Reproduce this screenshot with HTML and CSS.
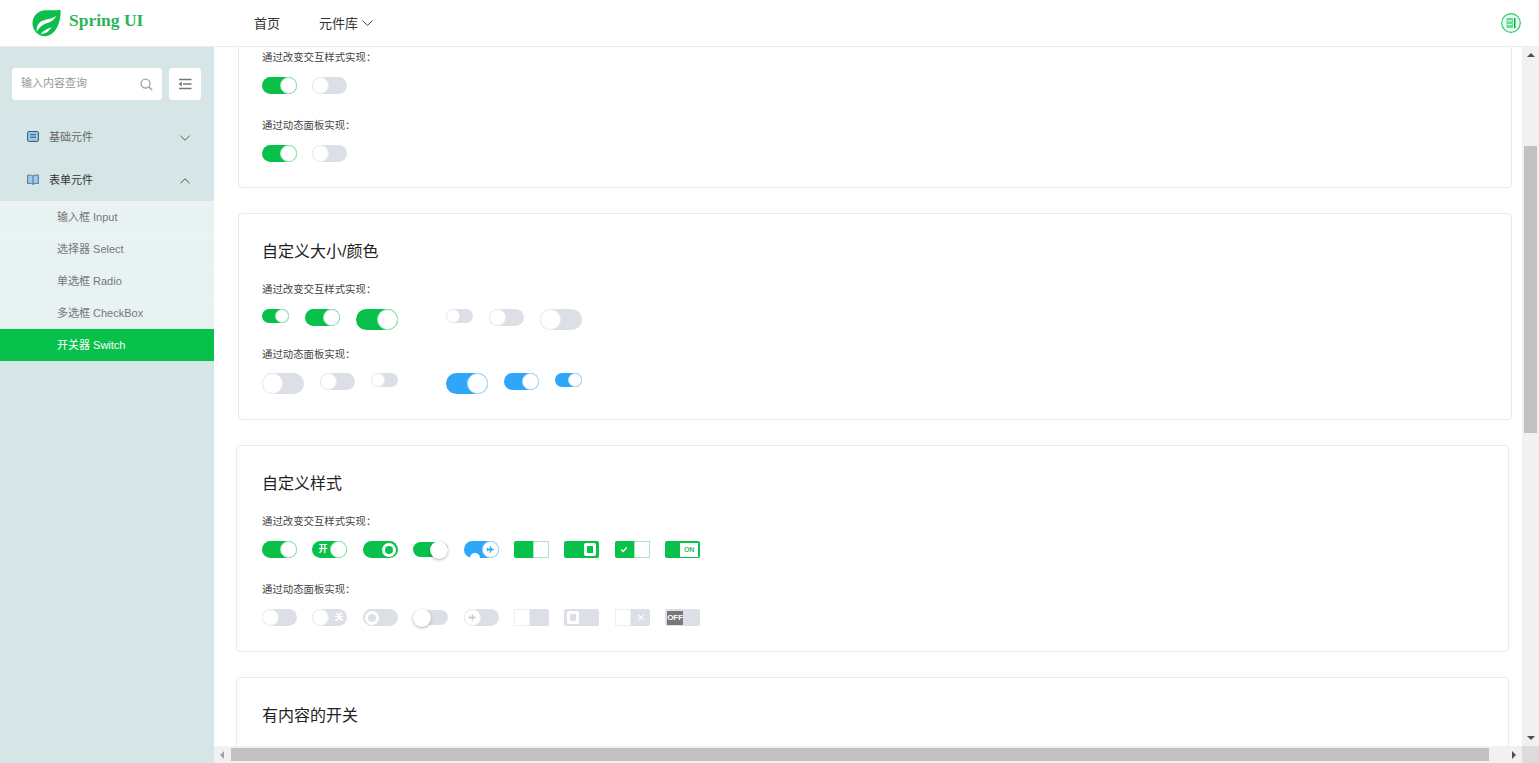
FILE: index.html
```html
<!DOCTYPE html>
<html lang="zh-CN">
<head>
  <meta charset="UTF-8">
  <title>Spring UI</title>
  <link rel="stylesheet" href="styles.css">
</head>
<body>

<div class="app">
  <header class="header">
    <div class="logo">
      <svg class="logo-icon" viewBox="0 0 30 28">
        <path d="M14 .8C19 .8 24.500 1.200 29.500 .4C30 6 29 13 26 18.500C23 24 18.500 27.800 13.500 27.800C6.300 27.800 .5 21.800 .5 14.300C.5 6.800 6.500 .8 14 .8z" fill="#0cbf4c"/>
        <path d="M5 23C4 17 7.500 12.500 13 11C17.500 9.800 21.500 9.500 25 6.500C23.500 10.500 20.500 12.500 16 14C11 15.600 8 18 5 23z" fill="#fff"/>
        <path d="M9 25C12 21.800 15.500 20.500 20 18.500C17.500 23 13.500 25.800 9 25z" fill="#fff"/>
      </svg>
      <span class="logo-text">Spring UI</span>
    </div>
    <nav class="nav">
      <a class="nav-link">首页</a>
      <a class="nav-link">元件库
        <svg class="nav-arrow" viewBox="0 0 11 6"><path d="M.5 .6L5.500 5.400L10.500 .6" fill="none" stroke="#444" stroke-width="1"/></svg>
      </a>
    </nav>
    <div class="user">
      <svg viewBox="0 0 20 20" width="20" height="20">
        <circle cx="10" cy="10" r="9.300" fill="#e8fbef" stroke="#35c972" stroke-width="1.200"/>
        <rect x="5.500" y="5" width="6.500" height="10" fill="#5fe08f"/>
        <rect x="6.500" y="7.300" width="4.500" height="1" fill="#e8fbef"/>
        <rect x="6.500" y="11" width="4.500" height="1" fill="#e8fbef"/>
        <rect x="13" y="5" width="1.500" height="10" fill="#12a64c"/>
      </svg>
    </div>
  </header>

  <div class="body">
    <aside class="sidebar">
      <div class="search-row">
        <div class="search">
          <span class="search-text">输入内容查询</span>
          <svg viewBox="0 0 14 14" width="13" height="13"><circle cx="6" cy="6" r="4.800" fill="none" stroke="#a8a8a8" stroke-width="1.500"/><path d="M9.400 9.400L13 13" stroke="#a8a8a8" stroke-width="1.700"/></svg>
        </div>
        <div class="collapse">
          <svg viewBox="0 0 14 12" width="14" height="12"><path d="M1 1.500H13.500M5 6H13.500M1 10.500H13.500" stroke="#777" stroke-width="1.500"/><path d="M3.800 3.500L.6 6L3.800 8.500z" fill="#777"/></svg>
        </div>
      </div>

      <div class="menu-title">
        <svg class="menu-icon" viewBox="0 0 12 11"><rect x=".6" y=".6" width="10.800" height="9.800" rx="1" fill="#9cc9ee" stroke="#35566f" stroke-width="1"/><path d="M3 3.700H9M3 6.200H9" stroke="#35566f" stroke-width="1"/></svg>
        <span>基础元件</span>
        <svg class="menu-arrow" viewBox="0 0 10 6"><path d="M.5 .8L5 5.200L9.500 .8" fill="none" stroke="#555" stroke-width="1"/></svg>
      </div>
      <div class="menu-title open">
        <svg class="menu-icon" viewBox="0 0 12 11"><path d="M6 2C4.500 1 2.500 .9 .6 1.200V9.500C2.500 9.200 4.500 9.300 6 10.300C7.500 9.300 9.500 9.200 11.400 9.500V1.200C9.500 .9 7.500 1 6 2z" fill="#9cc9ee" stroke="#4b6b80" stroke-width=".9"/><path d="M6 2V10.300" stroke="#4b6b80" stroke-width=".9"/></svg>
        <span>表单元件</span>
        <svg class="menu-arrow" viewBox="0 0 10 6"><path d="M.5 5.200L5 .8L9.500 5.200" fill="none" stroke="#555" stroke-width="1"/></svg>
      </div>
      <ul class="submenu">
        <li>输入框 Input</li>
        <li>选择器 Select</li>
        <li>单选框 Radio</li>
        <li>多选框 CheckBox</li>
        <li class="active">开关器 Switch</li>
      </ul>
    </aside>

    <main class="main">
      <div class="main-row">
        <div class="content">

          <section class="card card-top card-wide">
            <p class="label first">通过改变交互样式实现：</p>
            <div class="row">
              <span class="sw on"></span>
              <span class="sw"></span>
            </div>
            <p class="label">通过动态面板实现：</p>
            <div class="row">
              <span class="sw on"></span>
              <span class="sw"></span>
            </div>
          </section>

          <section class="card card-wide">
            <h3 class="card-title">自定义大小/颜色</h3>
            <p class="label">通过改变交互样式实现：</p>
            <div class="row row-size">
              <span class="sw sm on"></span>
              <span class="sw on"></span>
              <span class="sw lg on"></span>
              <span class="sw sm group"></span>
              <span class="sw"></span>
              <span class="sw lg"></span>
            </div>
            <p class="label tight">通过动态面板实现：</p>
            <div class="row row-size">
              <span class="sw lg"></span>
              <span class="sw"></span>
              <span class="sw sm"></span>
              <span class="sw lg on blue group"></span>
              <span class="sw on blue"></span>
              <span class="sw sm on blue"></span>
            </div>
          </section>

          <section class="card">
            <h3 class="card-title">自定义样式</h3>
            <p class="label">通过改变交互样式实现：</p>
            <div class="row row-custom">
              <span class="sw on"></span>
              <span class="sw on"><i class="sw-word left">开</i></span>
              <span class="sw on ring"></span>
              <span class="sw on thin"></span>
              <span class="sw on blue plane">
                <svg class="plane-icon" viewBox="0 0 10 10"><path d="M9.500 5L6.500 3.800L4.700 1H3.800L4.700 3.800H2.300L1.300 2.700H.6L1.200 5L.6 7.300H1.300L2.300 6.200H4.700L3.800 9H4.700L6.500 6.200z" fill="#2ea7f8"/></svg>
              </span>
              <span class="sw on box"></span>
              <span class="sw on box ring"></span>
              <span class="sw on box">
                <svg class="mark left" viewBox="0 0 10 8"><path d="M1.500 4L4 6.500L8.500 1.500" fill="none" stroke="#fff" stroke-width="1.600"/></svg>
              </span>
              <span class="sw on box tag"><i class="tag-word">ON</i></span>
            </div>
            <p class="label">通过动态面板实现：</p>
            <div class="row row-custom">
              <span class="sw"></span>
              <span class="sw"><i class="sw-word right">关</i></span>
              <span class="sw ring"></span>
              <span class="sw thin"></span>
              <span class="sw plane">
                <svg class="plane-icon" viewBox="0 0 10 10"><path d="M9.500 5L6.500 3.800L4.700 1H3.800L4.700 3.800H2.300L1.300 2.700H.6L1.200 5L.6 7.300H1.300L2.300 6.200H4.700L3.800 9H4.700L6.500 6.200z" fill="#c9ccd4"/></svg>
              </span>
              <span class="sw box"></span>
              <span class="sw box ring"></span>
              <span class="sw box">
                <svg class="mark right" viewBox="0 0 8 8"><path d="M1 1L7 7M7 1L1 7" fill="none" stroke="#fff" stroke-width="1.200"/></svg>
              </span>
              <span class="sw box tag"><i class="tag-word">OFF</i></span>
            </div>
          </section>

          <section class="card">
            <h3 class="card-title">有内容的开关</h3>
          </section>

        </div>
        <div class="vbar">
          <span class="arrow up"></span>
          <div class="vtrack"><div class="vthumb"></div></div>
          <span class="arrow down"></span>
        </div>
      </div>
      <div class="hbar">
        <span class="arrow back"></span>
        <div class="htrack"><div class="hthumb"></div></div>
        <span class="arrow forward"></span>
        <span class="corner"></span>
      </div>
    </main>
  </div>
</div>

</body>
</html>
```

FILE: styles.css
```css
* {
  box-sizing: border-box;
  margin: 0;
  padding: 0;
}

html, body {
  height: 100%;
  overflow: hidden;
}

body {
  background: #fff;
  color: #333;
  font-family: "Liberation Sans", "Noto Sans CJK SC", sans-serif;
}

.app {
  height: 100vh;
  display: flex;
  flex-direction: column;
}

/* header */
.header {
  height: 47px;
  flex: none;
  display: flex;
  align-items: center;
  background: #fff;
  border-bottom: 1px solid #e6eeee;
}

.logo {
  width: 254px;
  padding-left: 32px;
  display: flex;
  align-items: center;
  gap: 8px;
}

.logo-icon {
  width: 29px;
  height: 28px;
}

.logo-text {
  font-family: "Liberation Serif", serif;
  font-weight: bold;
  font-size: 17.500px;
  color: #2ab45a;
  position: relative;
  top: -3px;
}

.nav {
  display: flex;
  gap: 39px;
  flex: 1;
  margin-top: -2px;
}

.nav-link {
  font-size: 13px;
  color: #333;
  display: flex;
  align-items: center;
  gap: 4px;
}

.nav-arrow {
  width: 11px;
  height: 6px;
  margin-top: 2px;
}

.user {
  width: 38px;
  height: 20px;
  margin-top: -1px;
}

/* sidebar */
.body {
  flex: 1;
  display: flex;
  min-height: 0;
}

.sidebar {
  width: 214px;
  flex: none;
  background: #d6e5e5;
  padding-top: 21px;
}

.search-row {
  display: flex;
  gap: 7px;
  padding: 0 13px 0 12px;
  margin-bottom: 15px;
}

.search {
  width: 150px;
  height: 32px;
  background: #fff;
  border-radius: 3px;
  display: flex;
  align-items: center;
  justify-content: space-between;
  padding: 0 9px 0 9px;
}

.search-text {
  font-size: 11px;
  line-height: 14px;
  margin-top: -2px;
  color: #999;
}

.collapse {
  width: 32px;
  height: 32px;
  background: #fff;
  border-radius: 3px;
  display: flex;
  align-items: center;
  justify-content: center;
}

.menu-title {
  height: 43px;
  display: flex;
  align-items: center;
  padding: 0 24px 0 27px;
  font-size: 11px;
  color: #666;
}

.menu-title.open {
  color: #333;
}

.menu-title span {
  flex: 1;
  margin-left: 10px;
  position: relative;
  top: -1px;
}

.menu-icon {
  width: 12px;
  height: 11px;
}

.menu-arrow {
  width: 10px;
  height: 6px;
  position: relative;
  top: 1px;
}

.submenu {
  list-style: none;
}

.submenu li {
  height: 32px;
  line-height: 32px;
  padding-left: 57px;
  font-size: 11px;
  color: #777;
  background: linear-gradient(#eaf3f3, #e8f1f1);
}

.submenu li.active {
  background: #07c14a;
  color: #fff;
}

/* main area, with drawn scrollbars */
.main {
  flex: 1;
  min-width: 0;
  display: flex;
  flex-direction: column;
}

.main-row {
  flex: 1;
  min-height: 0;
  display: flex;
}

.content {
  flex: 1;
  min-width: 0;
  overflow: hidden;
  padding: 0 13px 0 22px;
}

.card {
  background: #fff;
  border: 1px solid #e8eaec;
  border-radius: 4px;
  padding: 26px 25px 25px 25px;
  margin-bottom: 25px;
}

.card-wide {
  margin-left: 2px;
  margin-right: -3px;
  padding-left: 23px;
}

.card-top {
  margin-top: -30px;
  padding-top: 33px;
}

.card-title {
  font-size: 16px;
  line-height: 24px;
  font-weight: normal;
  color: #222;
}

.label {
  font-size: 10.400px;
  line-height: 14px;
  color: #444;
  margin-top: 25px;
}

.card-title + .label {
  margin-top: 19px;
}

.label.first {
  margin-top: 0;
}

.label.tight {
  margin-top: 18px;
}

.row {
  display: flex;
  align-items: flex-start;
  gap: 15px;
  margin-top: 12px;
}

.row-size {
  gap: 16px;
}

.label.tight + .row-size {
  margin-top: 11px;
}

.row-custom {
  gap: 15.400px;
}

.group {
  margin-left: 32px;
}

/* switch */
.sw {
  position: relative;
  display: block;
  flex: none;
  width: 35px;
  height: 17px;
  border-radius: 9px;
  background: #dcdfe6;
}

.sw::after {
  content: "";
  box-sizing: border-box;
  position: absolute;
  top: 0;
  left: 0;
  width: 17px;
  height: 17px;
  border-radius: 50%;
  background: #fff;
  border: 1px solid #eceef2;
}

.sw.on {
  background: #07c14a;
}

.sw.on::after {
  left: auto;
  right: 0;
  border-color: #a8e6bf;
}

.sw.blue {
  background: #2ea7f8;
}

.sw.blue::after {
  border-color: #b3dffb;
}

.sw.sm {
  width: 27px;
  height: 14px;
}

.sw.sm::after {
  width: 14px;
  height: 14px;
}

.sw.lg {
  width: 42px;
  height: 21px;
  border-radius: 11px;
}

.sw.lg::after {
  width: 21px;
  height: 21px;
}

.sw-word {
  position: absolute;
  top: 0;
  line-height: 17px;
  font-size: 9px;
  font-weight: bold;
  font-style: normal;
  color: #fff;
}

.sw-word.left {
  left: 6px;
}

.sw-word.right {
  right: 4px;
}

.sw.ring::after {
  width: 14px;
  height: 14px;
  top: 1.500px;
  left: 2px;
  background: transparent;
  border: 3px solid #fff;
}

.sw.on.ring::after {
  left: auto;
  right: 2px;
  border-color: #fff;
}

.sw.thin {
  height: 15px;
  top: 1px;
}

.sw.thin::after {
  width: 18px;
  height: 18px;
  top: -1.500px;
  border: none;
  box-shadow: 0 1px 3px rgba(0, 0, 0, .3);
}

.sw.plane::after {
  border-color: #eceef2;
}

.sw.on.plane::after {
  border-color: #a9dafb;
}

.sw.on.plane::before {
  content: "";
  position: absolute;
  left: 6px;
  bottom: -5px;
  width: 10px;
  height: 10px;
  border-radius: 50%;
  background: #fff;
}

.plane-icon {
  position: absolute;
  z-index: 1;
  top: 4px;
  left: 4px;
  width: 9px;
  height: 9px;
}

.sw.on .plane-icon {
  left: auto;
  right: 4px;
}

.sw.box {
  border-radius: 2px;
}

.sw.box::after {
  border-radius: 1px;
  width: 16px;
  height: 17px;
}

.sw.box.ring::after {
  width: 12px;
  height: 13px;
  top: 2px;
  left: 3px;
  border: 3px solid #fff;
  border-radius: 2px;
}

.sw.on.box.ring::after {
  left: auto;
  right: 3px;
}

.mark {
  position: absolute;
  top: 5px;
  width: 8px;
  height: 7px;
}

.mark.left {
  left: 5px;
}

.mark.right {
  right: 5px;
}

.sw.tag::after {
  display: none;
}

.tag-word {
  position: absolute;
  top: 1.500px;
  height: 14px;
  width: 18px;
  line-height: 14px;
  text-align: center;
  font-size: 7px;
  font-weight: bold;
  font-style: normal;
}

.sw.on .tag-word {
  right: 2px;
  background: #fff;
  color: #2fb862;
}

.sw:not(.on) .tag-word {
  left: 2px;
  background: #777;
  color: #fff;
  width: 16px;
  font-size: 8px;
}

/* scrollbars */
.vbar {
  width: 17px;
  flex: none;
  background: #f1f1f1;
  display: flex;
  flex-direction: column;
  align-items: center;
}

.vtrack {
  flex: 1;
  width: 100%;
  padding: 84px 2px 0;
}

.vthumb {
  height: 287px;
  background: #c1c1c1;
}

.hbar {
  height: 17px;
  flex: none;
  background: #f1f1f1;
  display: flex;
  align-items: center;
}

.htrack {
  flex: 1;
  height: 13px;
  padding: 0 17px 0 1px;
}

.hthumb {
  height: 100%;
  background: #c1c1c1;
}

.corner {
  width: 17px;
  height: 17px;
  background: #dcdcdc;
}

.arrow {
  flex: none;
  width: 0;
  height: 0;
  border-style: solid;
  border-color: transparent;
}

.arrow.up {
  margin: 6px 0 5px;
  border-width: 0 4px 4px;
  border-bottom-color: #505050;
}

.arrow.down {
  margin: 5px 0 6px;
  border-width: 4px 4px 0;
  border-top-color: #505050;
}

.arrow.back {
  margin: 0 6px;
  border-width: 4px 4px 4px 0;
  border-right-color: #a3a3a3;
}

.arrow.forward {
  margin: 0 6px;
  border-width: 4px 0 4px 4px;
  border-left-color: #505050;
}
```
